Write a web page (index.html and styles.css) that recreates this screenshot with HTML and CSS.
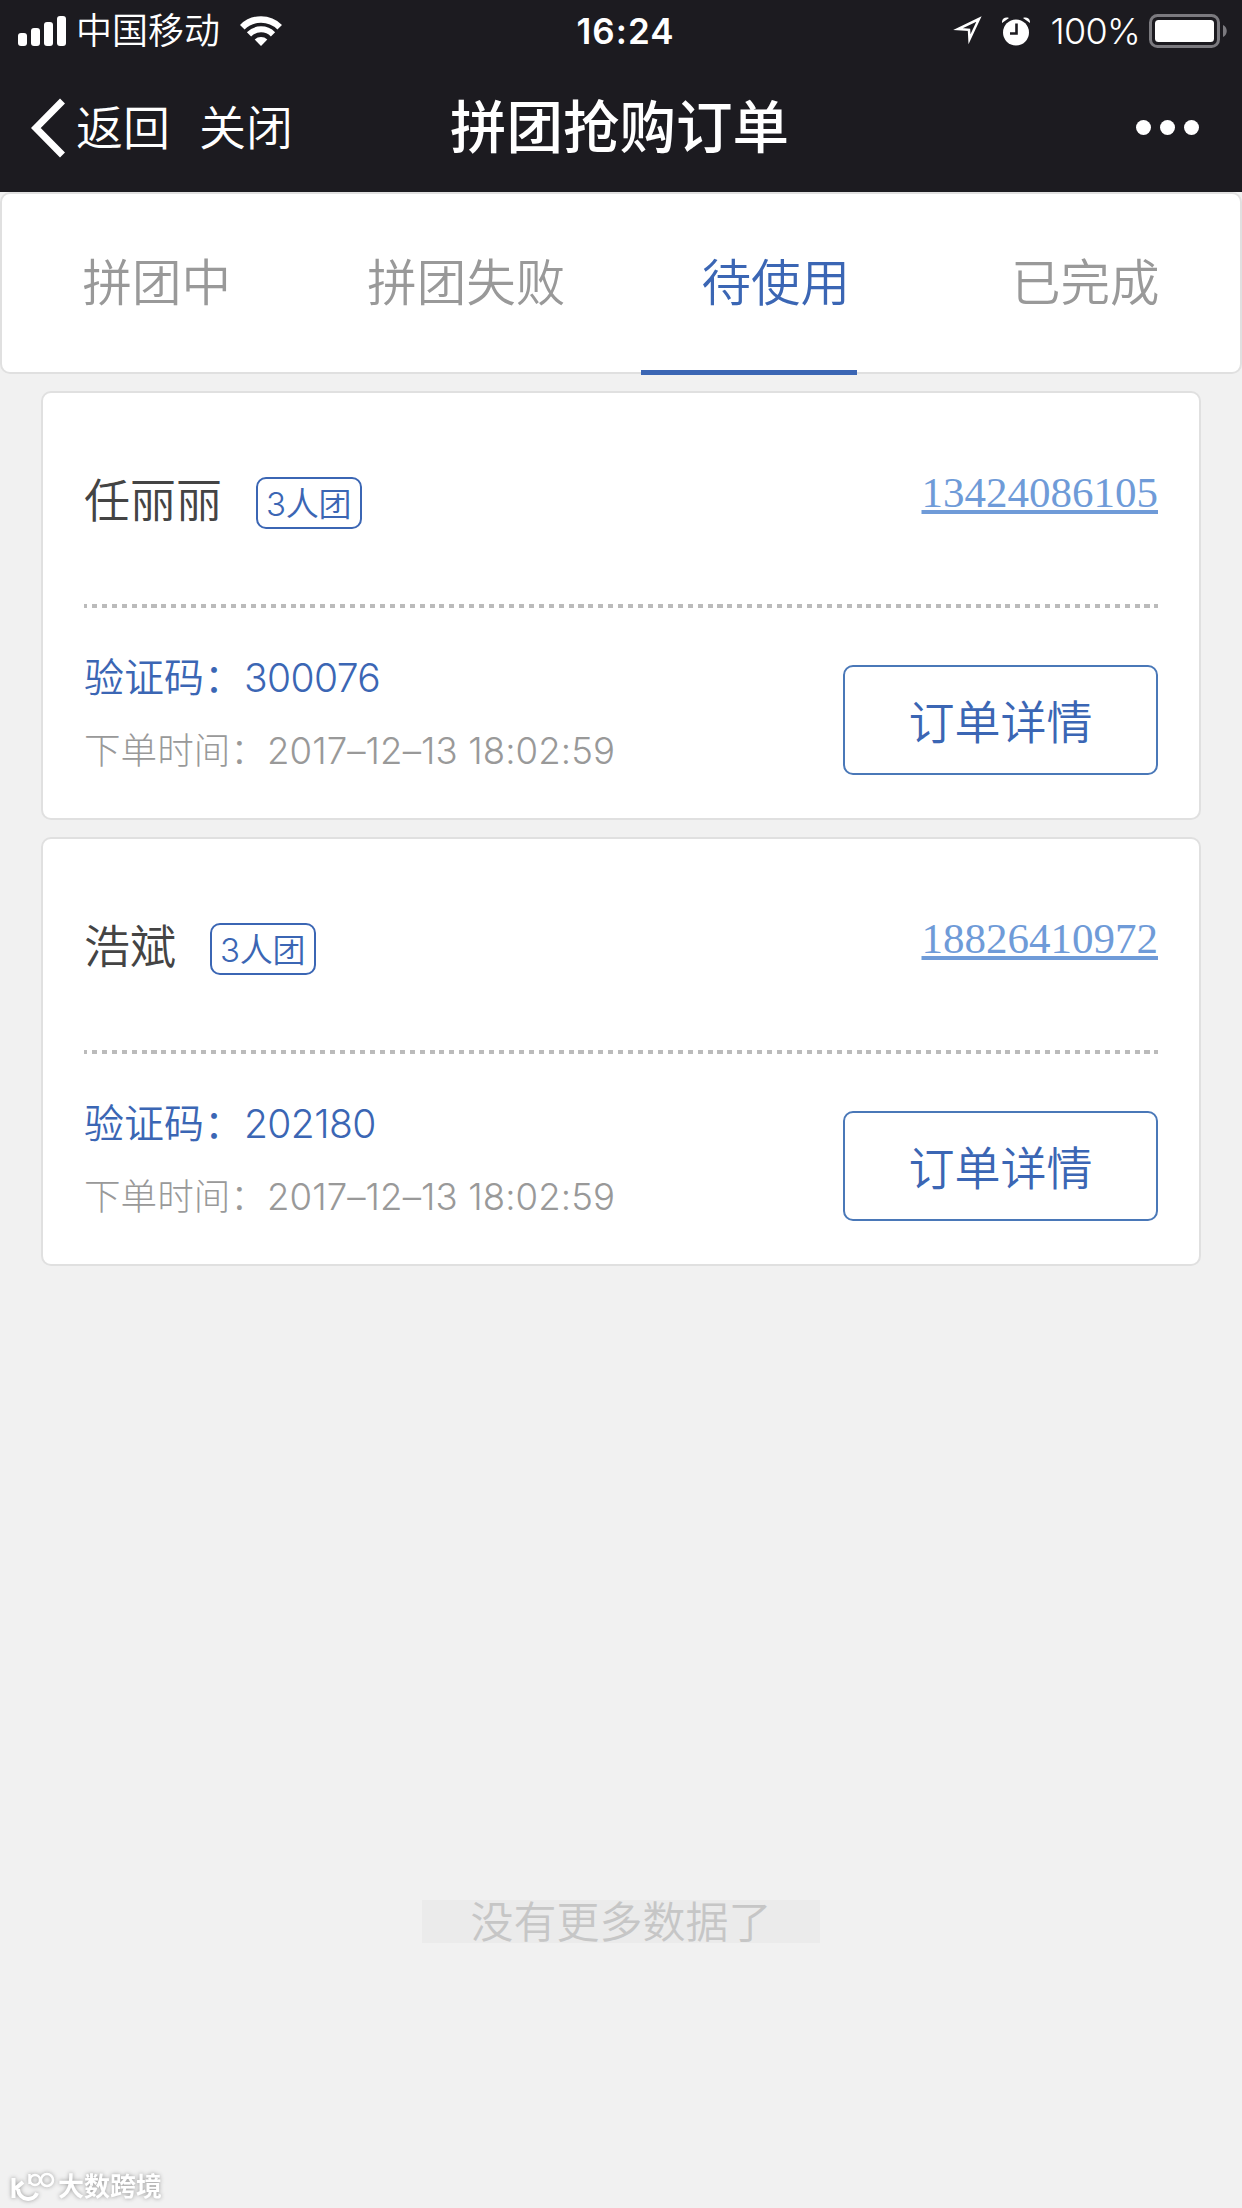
FILE: index.html
```html
<!doctype html>
<html lang="zh-cn">
  <head>
    <meta charset="UTF-8" />
    <meta name="viewport" content="width=device-width, initial-scale=1.0" />
    <title>拼团抢购订单</title>

    <link rel="stylesheet" href="styles.css">
  </head>

  <body>
    <header class="header">
      <div class="status-bar">
        <div class="status-left">
          <svg class="icon-signal" width="48" height="30" viewBox="0 0 48 30" fill="#fff">
            <rect x="0" y="17" width="9" height="13" rx="3" />
            <rect x="13" y="12" width="9" height="18" rx="3" />
            <rect x="26" y="6" width="9" height="24" rx="3" />
            <rect x="39" y="0" width="9" height="30" rx="3" />
          </svg>
          <span class="carrier">中国移动</span>
          <svg class="icon-wifi" width="42" height="30" viewBox="0 0 42 30" fill="none" stroke="#fff">
            <path d="M2.300 11.200a26.500 26.500 0 0 1 37.400 0" stroke-width="6.500" />
            <path d="M9 18.300a17 17 0 0 1 24 0" stroke-width="6" />
            <path d="M21 30l-6.300-6.600a9.500 9.500 0 0 1 12.600 0z" fill="#fff" stroke="none" />
          </svg>
        </div>
        <span class="clock">16:24</span>
        <div class="status-right">
          <svg width="30" height="30" viewBox="0 0 30 30" fill="none" stroke="#fff" stroke-width="2.500">
            <path d="M27 3L6 13l11 .8.500 9.500z" stroke-miterlimit="10" />
          </svg>
          <svg class="icon-alarm" width="28" height="29" viewBox="0 0 28 29">
            <circle cx="14" cy="15.500" r="13" fill="#fff" />
            <path d="M0 6C-.5 2 3-.5 7 1zM28 6C28.500 2 25-.5 21 1z" fill="#fff" />
            <path d="M14.500 6.500v10H8" fill="none" stroke="#1c1b20" stroke-width="2.600" />
          </svg>
          <span class="percent">100%</span>
          <svg width="79" height="34" viewBox="0 0 79 34">
            <rect x="1.500" y="1.500" width="68" height="31" rx="7" fill="none" stroke="#7b7a7f" stroke-width="3" />
            <rect x="6" y="6" width="59" height="22" rx="3.500" fill="#fff" />
            <path d="M74 11c5 2 5 10 0 12z" fill="#7b7a7f" />
          </svg>
        </div>
      </div>
      <nav class="nav-bar">
        <div class="nav-left">
          <svg width="34" height="60" viewBox="0 0 34 60" fill="none" stroke="#fff" stroke-width="7">
            <path d="M31.500 3L4.800 30l26.700 27" />
          </svg>
          <span class="nav-back">返回</span>
          <span>关闭</span>
        </div>
        <h1 class="nav-title">拼团抢购订单</h1>
        <div class="nav-more"><i></i><i></i><i></i></div>
      </nav>
    </header>

    <div class="tabs">
      <div class="tab">拼团中</div>
      <div class="tab">拼团失败</div>
      <div class="tab active">待使用</div>
      <div class="tab">已完成</div>
    </div>

    <main class="order-list">
      <section class="order">
        <div class="order-head">
          <span class="name">任丽丽</span>
          <span class="badge">3人团</span>
          <a class="phone">13424086105</a>
        </div>
        <div class="order-body">
          <div class="order-info">
            <p class="code">验证码：<span>300076</span></p>
            <p class="time">下单时间：<span>2017–12–13 18:02:59</span></p>
          </div>
          <button class="detail-btn">订单详情</button>
        </div>
      </section>

      <section class="order">
        <div class="order-head">
          <span class="name">浩斌</span>
          <span class="badge">3人团</span>
          <a class="phone">18826410972</a>
        </div>
        <div class="order-body">
          <div class="order-info">
            <p class="code">验证码：<span>202180</span></p>
            <p class="time">下单时间：<span>2017–12–13 18:02:59</span></p>
          </div>
          <button class="detail-btn">订单详情</button>
        </div>
      </section>
    </main>

    <p class="no-more">没有更多数据了</p>

    <div class="watermark">
      <svg width="46" height="32" viewBox="0 0 46 32" fill="none" stroke="#fff">
        <path d="M3.500 7v20M13 11L5 18M8 18c1 12 16 13 19 4" stroke-width="4" />
        <path d="M19.500 3v10" stroke-width="2.500" />
        <circle cx="25" cy="9" r="5" stroke-width="2.500" />
        <circle cx="37" cy="9" r="6" stroke-width="2.500" />
      </svg>
      <span>大数跨境</span>
    </div>
  </body>
</html>
```
FILE: styles.css
```css
:root {
  --primary-color: #3b66b4;
  --header-bg: #1c1b20;
  --bg-color: #f1f1f1;
  --border-color: #e0e0e0;
  --text-color: #444444;
  --text-secondary: #999999;
  --link-color: #6f9bd8;
}

* {
  margin: 0;
  padding: 0;
  box-sizing: border-box;
}

body {
  height: 2208px;
  display: flex;
  flex-direction: column;
  background-color: var(--bg-color);
  font-family: Inter, 'Noto Sans CJK SC', sans-serif;
  font-weight: 350;
  color: var(--text-color);
  overflow: hidden;
  position: relative;
}

svg {
  display: block;
  flex: none;
}

.header {
  height: 192px;
  background-color: var(--header-bg);
  color: #fff;
}

.status-bar {
  display: grid;
  grid-template-columns: 1fr auto 1fr;
  height: 61px;
  padding: 0 14px 0 18px;
  font-size: 36px;
  line-height: 61px;
}

.status-left,
.status-right {
  display: flex;
  align-items: center;
}

.status-right {
  justify-content: flex-end;
}

.carrier {
  margin: 0 20px 0 10px;
}

.clock {
  padding: 1px 0 0 5px;
  font-size: 35px;
  font-weight: 600;
  letter-spacing: 1px;
}

.icon-alarm {
  margin: 0 20px;
}

.percent {
  margin-right: 9px;
  letter-spacing: -0.7px;
}

.nav-bar {
  display: grid;
  grid-template-columns: 1fr auto 1fr;
  align-items: center;
  height: 131px;
  padding: 0 43px 0 31px;
  font-size: 47px;
  line-height: 133px;
}

.nav-left {
  display: flex;
  align-items: center;
}

.nav-back {
  margin: 0 29px 0 11px;
}

.nav-title {
  padding-left: 9px;
  font-size: 56.5px;
  font-weight: 500;
}

.nav-more {
  display: flex;
  justify-content: flex-end;
  gap: 9px;
}

.nav-more i {
  width: 15px;
  height: 15px;
  border-radius: 50%;
  background-color: #fff;
}

.tabs {
  display: grid;
  grid-template-columns: repeat(4, 1fr);
  height: 182px;
  border: 2px solid var(--border-color);
  border-radius: 10px;
  background-color: #fff;
}

.tab {
  position: relative;
  font-size: 49.5px;
  line-height: 179px;
  text-align: center;
  color: var(--text-secondary);
}

.tab.active {
  color: var(--primary-color);
}

.tab.active::after {
  content: '';
  position: absolute;
  left: 20px;
  bottom: -2px;
  width: 216px;
  height: 5px;
  background-color: var(--primary-color);
}

.order-list {
  display: flex;
  flex-direction: column;
  gap: 17px;
  padding: 17px 41px 0;
}

.order {
  height: 429px;
  padding: 0 41px;
  border: 2px solid var(--border-color);
  border-radius: 10px;
  background-color: #fff;
}

.order-head {
  display: flex;
  align-items: flex-start;
  height: 215px;
  padding-top: 84px;
  /* dashed divider */
  background: repeating-linear-gradient(90deg, #bbb 0 3px, transparent 3px 7.9px, #bbb 7.9px 9.93px) 0 100% / 100% 4px no-repeat;
}

.name {
  margin-right: 34px;
  font-size: 46px;
  line-height: 46px;
}

.badge {
  height: 52px;
  padding: 0 9px 0 8px;
  border: 2px solid var(--primary-color);
  border-radius: 10px;
  font-size: 33px;
  line-height: 50px;
  letter-spacing: -0.3px;
  color: var(--primary-color);
}

.phone {
  margin-left: auto;
  font-family: 'Liberation Serif', serif;
  font-size: 43px;
  line-height: 32px;
  color: var(--link-color);
  text-decoration: underline;
}

.order-body {
  display: flex;
  justify-content: space-between;
  padding-top: 57px;
}

.order-info {
  white-space: nowrap;
}

.code {
  font-size: 40px;
  line-height: 26px;
  color: var(--primary-color);
}

.code span {
  font-size: 39px;
  letter-spacing: -0.6px;
}

.time {
  margin-top: 47px;
  font-size: 36.6px;
  font-weight: 300;
  line-height: 26px;
  color: var(--text-secondary);
}

.time span {
  letter-spacing: 0.1px;
}

.detail-btn {
  width: 315px;
  height: 110px;
  border: 2px solid #4a78b8;
  border-radius: 10px;
  background: none;
  font-family: inherit;
  font-size: 46px;
  font-weight: inherit;
  line-height: 108px;
  padding-top: 1px;
  color: var(--primary-color);
}

.no-more {
  align-self: center;
  width: 398px;
  height: 43px;
  margin-top: 634px;
  background-color: #ebebeb;
  font-size: 43px;
  line-height: 45px;
  text-align: center;
  color: #c6c6c6;
}

.watermark {
  position: absolute;
  left: 10px;
  bottom: 4px;
  display: flex;
  align-items: center;
  gap: 2px;
  font-size: 26px;
  font-weight: 700;
  line-height: 34px;
  color: #fff;
  filter: drop-shadow(0 0 2px #999);
}
```
